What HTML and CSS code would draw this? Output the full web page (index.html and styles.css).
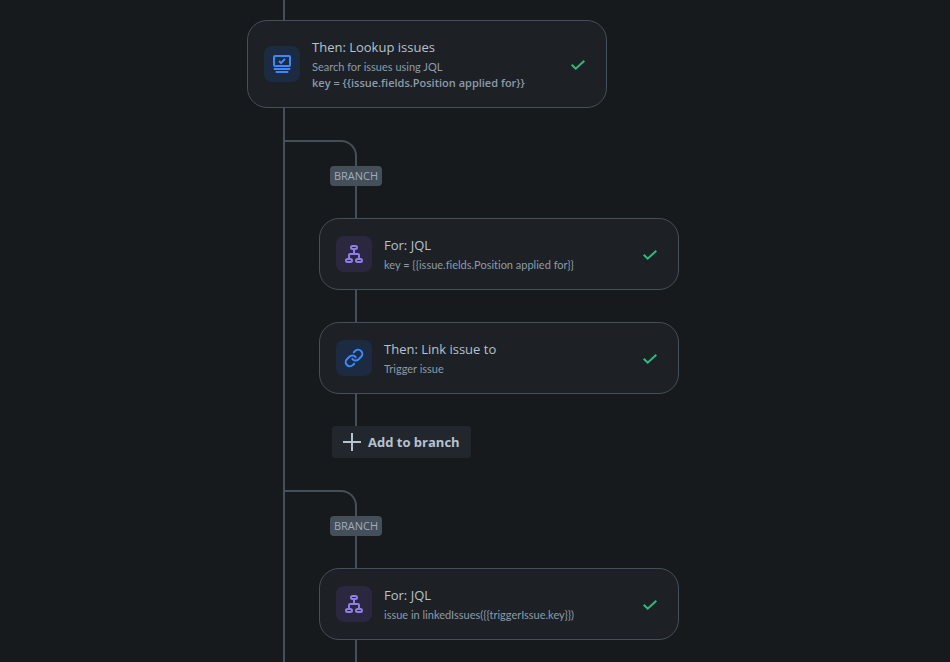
FILE: index.html
```html
<!DOCTYPE html>
<html lang="en">
<head>
<meta charset="utf-8">
<meta name="viewport" content="width=device-width, initial-scale=1">
<title>Automation rule</title>
<link rel="stylesheet" href="styles.css">
</head>
<body>
<svg class="sprite" aria-hidden="true">
  <symbol id="check" viewBox="0 0 24 24"><path d="M5.700 12.700l4 4 8.600-8" fill="none" stroke="currentColor" stroke-width="2"/></symbol>
  <symbol id="branch-icon" viewBox="0 0 20 20">
    <g fill="none" stroke="currentColor" stroke-width="2">
      <rect x="7" y="2" width="6" height="3" rx="1.500"/>
      <rect x="2" y="15" width="6" height="3" rx="1.500"/>
      <rect x="12" y="15" width="6" height="3" rx="1.500"/>
      <path d="M10 5v5M5 15v-4q0-1 1-1h8q1 0 1 1v4"/>
    </g>
  </symbol>
</svg>
<main class="flow">
  <div class="connector connector-top"></div>
  <article class="card">
    <span class="icon icon-blue">
      <svg width="20" height="20" viewBox="0 0 20 20" fill="none" stroke="currentColor" stroke-width="2" aria-hidden="true">
        <rect x="2" y="2" width="16" height="10" rx="1"/>
        <path d="M7 7l2 2 4-4"/>
        <path d="M2.500 15h15M4.500 18h11" stroke-linecap="round"/>
      </svg>
    </span>
    <div class="text">
      <h2>Then: Lookup issues</h2>
      <p>Search for issues using JQL</p>
      <p><strong>key = {{issue.fields.Position applied for}}</strong></p>
    </div>
    <svg class="check" role="img" aria-label="Success"><use href="#check"/></svg>
  </article>

  <div class="branches">
    <section class="branch">
      <div class="elbow"></div>
      <div class="steps">
        <div class="badge-row"><span class="badge">BRANCH</span></div>
        <div class="connector"></div>
        <article class="card">
          <span class="icon icon-purple"><svg width="20" height="20" aria-hidden="true"><use href="#branch-icon"/></svg></span>
          <div class="text">
            <h2>For: JQL</h2>
            <p>key = {{issue.fields.Position applied for}}</p>
          </div>
          <svg class="check" role="img" aria-label="Success"><use href="#check"/></svg>
        </article>
        <div class="connector"></div>
        <article class="card">
          <span class="icon icon-blue">
            <svg width="20" height="20" viewBox="0 0 24 24" fill="none" stroke="currentColor" stroke-width="2.400" stroke-linecap="round" aria-hidden="true">
              <path d="M10 13a5 5 0 0 0 7.540.54l3-3a5 5 0 0 0-7.070-7.070l-1.720 1.710"/>
              <path d="M14 11a5 5 0 0 0-7.540-.54l-3 3a5 5 0 0 0 7.070 7.070l1.710-1.710"/>
            </svg>
          </span>
          <div class="text">
            <h2>Then: Link issue to</h2>
            <p>Trigger issue</p>
          </div>
          <svg class="check" role="img" aria-label="Success"><use href="#check"/></svg>
        </article>
        <div class="connector"></div>
        <button class="add" type="button">
          <svg width="18" height="18" viewBox="0 0 18 18" fill="none" stroke="currentColor" stroke-width="2" aria-hidden="true"><path d="M9 0v18M0 9h18"/></svg>
          Add to branch
        </button>
      </div>
    </section>

    <section class="branch">
      <div class="elbow"></div>
      <div class="steps">
        <div class="badge-row"><span class="badge">BRANCH</span></div>
        <div class="connector"></div>
        <article class="card">
          <span class="icon icon-purple"><svg width="20" height="20" aria-hidden="true"><use href="#branch-icon"/></svg></span>
          <div class="text">
            <h2>For: JQL</h2>
            <p>issue in linkedIssues({{triggerIssue.key}})</p>
          </div>
          <svg class="check" role="img" aria-label="Success"><use href="#check"/></svg>
        </article>
        <div class="connector connector-end"></div>
      </div>
    </section>
  </div>
</main>
</body>
</html>
```
FILE: styles.css
```css
* {
  box-sizing: border-box;
}

body {
  margin: 0;
  background: #161a1d;
  color: #b6c2cf;
  font-family: "Segoe UI", "Open Sans", "Noto Sans", sans-serif;
}

h2,
p {
  margin: 0;
}

.sprite {
  position: absolute;
  width: 0;
  height: 0;
}

.flow {
  display: flex;
  flex-direction: column;
  min-height: 100vh;
  padding-left: 26%;
}

.connector {
  flex: none;
  width: 2px;
  height: 32px;
  margin-left: 36px;
  background: #454f59;
}

.connector-top {
  height: 20px;
}

.connector-end {
  flex: 1 0 20px;
}

.card {
  display: flex;
  align-items: center;
  gap: 12px;
  width: 100%;
  max-width: 360px;
  min-height: 72px;
  padding: 16px;
  border: 1px solid #454f59;
  border-radius: 20px;
  background: #1d2125;
}

.icon {
  display: grid;
  flex: none;
  place-items: center;
  width: 36px;
  height: 36px;
  border-radius: 8px;
}

.icon-blue {
  background: #1c2b41;
  color: #388bff;
}

.icon-purple {
  background: #2b273f;
  color: #8f7ee7;
}

.text {
  flex: 1;
}

.text h2 {
  margin-bottom: 2px;
  font-size: 13px;
  font-weight: 400;
  line-height: 20px;
}

.text p {
  color: #8c9bab;
  font-family: "Segoe UI", Lato, "Noto Sans", sans-serif;
  font-size: 11px;
  font-variant-ligatures: none;
  line-height: 16px;
}

.text strong {
  font-family: "Segoe UI", "Open Sans", "Noto Sans", sans-serif;
  font-weight: 600;
}

.check {
  flex: none;
  width: 24px;
  height: 24px;
  color: #2abb7f;
}

.branches,
.branch,
.steps {
  display: flex;
  flex-direction: column;
}

.branches {
  flex: 1;
  margin-left: 36px;
  border-left: 2px solid #454f59;
}

.branch {
  padding-top: 32px;
}

.branch:last-child,
.branch:last-child .steps {
  flex: 1;
}

.elbow {
  width: 74px;
  height: 26px;
  margin-left: -2px;
  border: solid #454f59;
  border-width: 2px 2px 0 0;
  border-top-right-radius: 16px;
}

.steps {
  align-items: flex-start;
  margin-left: 34px;
}

.badge-row {
  display: flex;
  justify-content: center;
  width: 74px;
}

.badge {
  padding: 2px 4px;
  border-radius: 4px;
  background: #454f59;
  color: #9fadbc;
  font-size: 11px;
  line-height: 16px;
}

.add {
  display: flex;
  align-items: center;
  gap: 7px;
  height: 32px;
  margin-left: 13px;
  padding: 0 11px;
  border: 0;
  border-radius: 3px;
  background: #22272e;
  color: #b6c2cf;
  font: 700 13px/20px "Segoe UI", "Open Sans", "Noto Sans", sans-serif;
}
```
